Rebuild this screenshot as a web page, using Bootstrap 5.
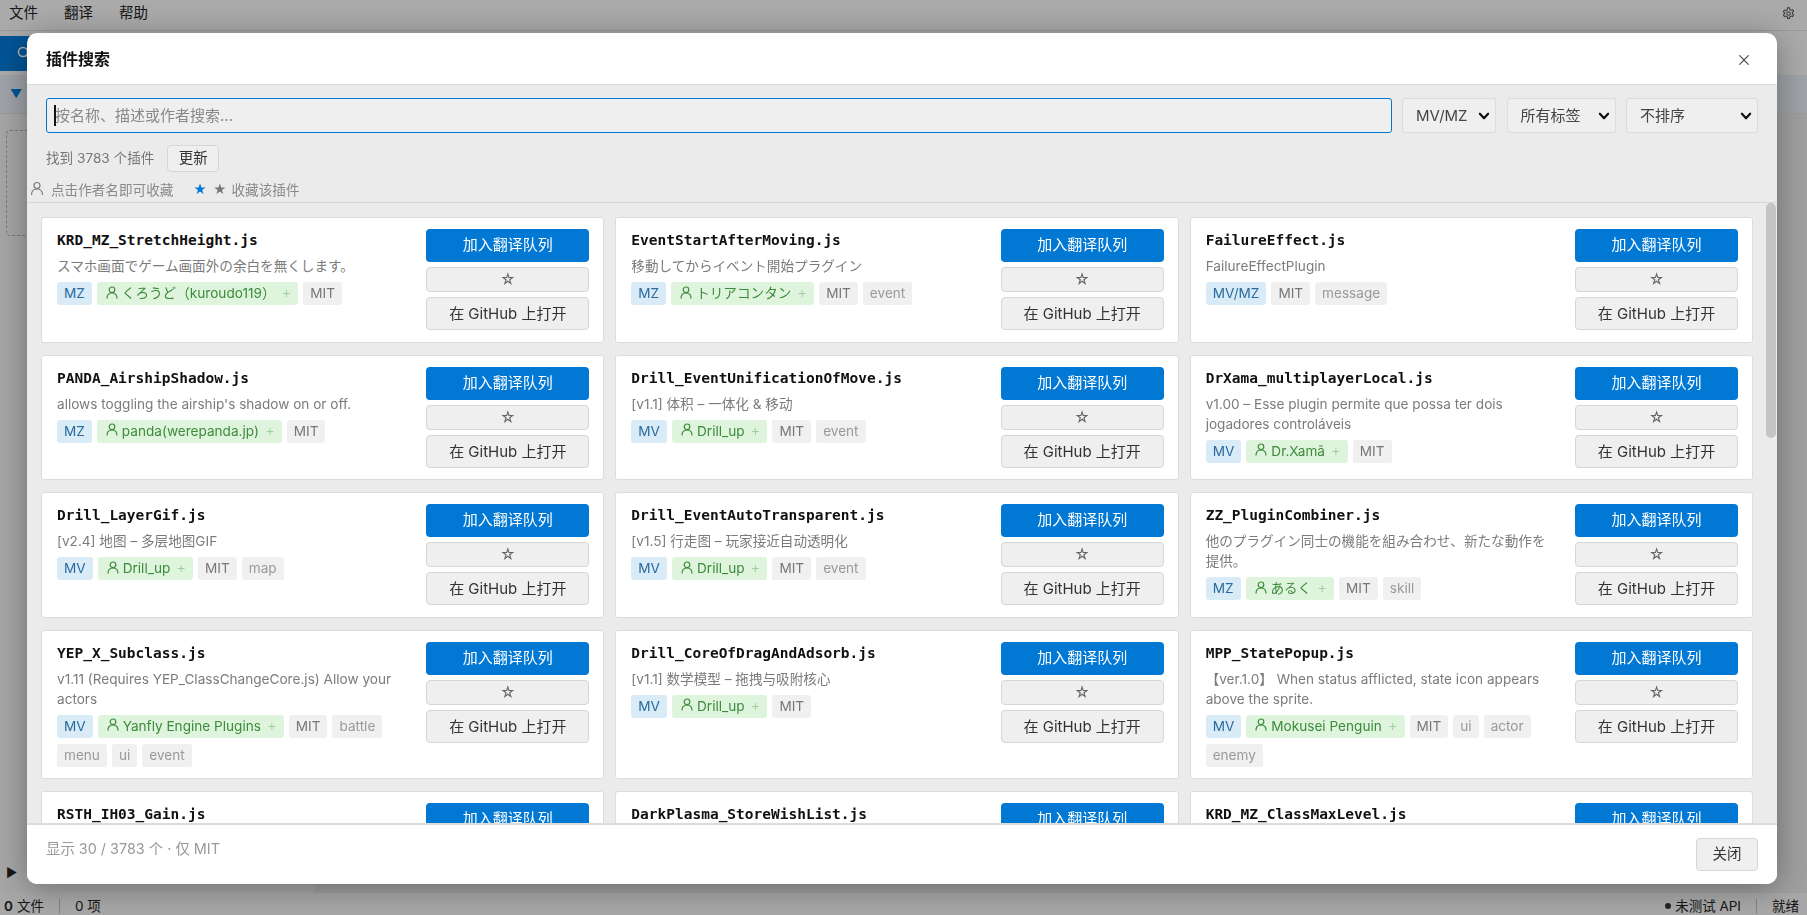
<!DOCTYPE html>
<html lang="zh-CN">
<head>
  <meta charset="UTF-8">
  <title>插件搜索</title>
  <link rel="stylesheet" href="https://cdn.jsdelivr.net/npm/bootstrap@5.3.0/dist/css/bootstrap.min.css">
  <style>
    html, body { height: 100%; overflow: hidden; }
    body {
      font-family: "Inter", "Noto Sans CJK SC", sans-serif;
      font-size: 14px;
      color: #222;
      background: #f2f2f2;
      text-spacing-trim: space-all;
    }
    .app-shell { height: 100vh; }
    .menu-strip { height: 31px; background: #f4f4f5; border-bottom: 1px solid #ddd; padding: 0 8px 4px 9px; font-size: 14.5px; }
    .menu-strip span { margin-right: 26px; }
    .tool-strip { height: 44px; background: #f4f4f5; }
    .tool-blue { width: 60px; height: 35px; background: #0078d4; border-radius: 0 6px 6px 0; padding-left: 17px; }
    .filter-strip { height: 39px; background: #e3e9ef; border-bottom: 1px solid #ddd; color: #0078d4; padding-left: 10px; font-size: 12px; }
    .work-area { background: #e4e4e4; }
    .side-pane { width: 315px; background: #ededed; padding: 16px 6px 11px; }
    .drop-box { height: 106px; border: 1px dashed #aaa; border-radius: 4px; }
    .status-strip { height: 22px; background: #f0f0f0; font-size: 13.5px; padding: 4px 8px 0 4px; }
    .status-sep { width: 1px; height: 15px; background: #bbb; margin: 0 15px; }
    .status-dot { width: 6px; height: 6px; border-radius: 50%; background: #333; margin-right: 4px; }

    .dim-layer { position: fixed; inset: 0; background: rgba(0, 0, 0, .3); }
    .search-dialog {
      position: absolute;
      left: 27px;
      top: 33px;
      width: 1750px;
      height: 851px;
      border: 0;
      border-radius: 10px;
      overflow: hidden;
      background: #fff;
      box-shadow: 0 4px 32px rgba(0, 0, 0, .35);
    }
    .search-dialog .modal-header { height: 52px; padding: 0 19px; border-bottom: 1px solid #d9d9d9; flex: none; }
    .search-dialog .modal-title { font-size: 16px; font-weight: 700; color: #111; }
    .search-dialog .btn-close { font-size: 10px; margin: 2px 5px 0 0; padding: 4px; opacity: .65; }

    .filter-pane { height: 118px; flex: none; background: #ebebeb; border-bottom: 1px solid #d6d6d6; padding: 13px 19px 0; }
    .filter-row { gap: 10.5px; }
    .search-wrap { position: relative; flex: 1; }
    .search-input {
      height: 35px;
      background: #efefef;
      border: 1px solid #0078d4;
      border-radius: 3px;
      padding: 0 8px;
      font-size: 15px;
    }
    .search-input::placeholder { color: #8a8a8a; }
    .search-input:focus { background: #efefef; border-color: #0078d4; box-shadow: none; }
    .caret-bar { position: absolute; left: 8px; top: 7px; width: 1.5px; height: 21px; background: #111; }
    .filter-select {
      height: 35px;
      flex: none;
      background-color: #efefef;
      background-image: url("data:image/svg+xml,%3csvg xmlns='http://www.w3.org/2000/svg' viewBox='0 0 16 16'%3e%3cpath fill='none' stroke='%23111' stroke-linecap='round' stroke-linejoin='round' stroke-width='3' d='m2.500 5 5.500 6 5.500-6'/%3e%3c/svg%3e");
      background-size: 12px 12px;
      background-position: right 5px center;
      border: 1px solid #dcdcdc;
      border-radius: 3px;
      font-size: 15px;
      color: #444;
      padding: 2px 22px 0 13px;
    }
    .count-line { margin-top: 12px; font-size: 13.6px; color: #777; }
    .plain-btn {
      background: #efefef;
      border: 1px solid #d6d6d6;
      border-radius: 4px;
      color: #333;
      font-size: 14.5px;
      line-height: 1;
    }
    .plain-btn:hover { background: #e6e6e6; border-color: #d6d6d6; }
    .refresh-btn { width: 52px; height: 27px; padding: 0; margin-left: 13px; }
    .hint-line { margin: 8px 0 0 -16px; font-size: 13.6px; color: #8a8a8a; }
    .hint-line svg { margin-right: 7px; margin-top: -3px; }
    .star-blue { color: #0078d4; margin-left: 20px; margin-right: 6px; font-size: 13px; }
    .star-grey { color: #777; margin-right: 5px; font-size: 13px; }

    .result-pane { position: relative; flex: 1; min-height: 0; background: #ebebeb; overflow: hidden; padding: 14px 24px 0 14px; }
    .scroll-thumb { position: absolute; top: 0; right: 1px; width: 10px; height: 235px; background: #c4c4c4; border-radius: 5px; }
    .result-grid { display: grid; grid-template-columns: repeat(3, 1fr); gap: 12px 11px; }
    .plugin-box {
      background: #fff;
      border: 1px solid #dcdcdc;
      border-radius: 3px;
      padding: 11px 14px 11px 15px;
      min-height: 125.500px;
    }
    .plugin-info { flex: 1; min-width: 0; padding-right: 20px; }
    .plugin-name { font-family: "DejaVu Sans Mono", monospace; font-size: 14.5px; font-weight: 700; line-height: 20px; margin-top: 1px; color: #111; }
    .plugin-desc { font-size: 13.6px; line-height: 20px; color: #7b7b7b; margin-top: 6px; }
    .pill-row { display: flex; flex-wrap: wrap; gap: 6px 5px; margin-top: 6px; }
    .tag-pill {
      display: inline-flex;
      align-items: center;
      height: 23px;
      padding: 0 7px;
      border-radius: 3px;
      font-size: 13.6px;
      background: #f0f0f0;
      color: #999;
      white-space: nowrap;
    }
    .pill-engine { background: #d8ebf7; color: #2a6a9e; }
    .pill-author { background: #dff4dc; color: #3c8a3c; padding-left: 9px; }
    .pill-author svg { margin-right: 4px; margin-top: -3px; }
    .pill-author i { font-style: normal; color: #9fcf9f; margin-left: 6px; font-size: 15px; font-weight: 300; }
    .pill-license { color: #777; }
    .action-stack { width: 163px; flex: none; display: flex; flex-direction: column; gap: 5px; }
    .queue-btn {
      height: 33px;
      background: #0078d4;
      border: 0;
      border-radius: 4px;
      color: #fff;
      font-size: 15px;
      padding: 0;
    }
    .queue-btn:hover { background: #0078d4; color: #fff; }
    .action-stack .plain-btn { padding: 0; }
    .fav-btn { height: 25px; color: #666; }
    .action-stack .fav-btn, .action-stack .github-btn { font-size: 15px; }
    .github-btn { height: 33px; }

    .search-dialog .modal-footer { height: 61px; flex: none; padding: 0 19px; border-top: 2px solid #dcdcdc; background: #fff; }
    .footer-note { font-size: 14.4px; color: #999; margin-bottom: 12px; }
    .close-btn { width: 62px; height: 33px; padding: 0; margin: 0; }
  </style>
</head>
<body>

  <div class="app-shell d-flex flex-column">
    <div class="menu-strip d-flex align-items-center">
      <span>文件</span><span>翻译</span><span>帮助</span>
      <svg class="ms-auto me-1" width="13" height="13" viewBox="0 0 16 16" fill="none" stroke="#555" stroke-width="1.3"><path d="M6.800 1h2.400l.4 2 1.600.9 1.900-.7 1.200 2.100-1.500 1.300v1.800l1.500 1.300-1.200 2.100-1.900-.7-1.600.9-.4 2H6.800l-.4-2-1.600-.9-1.900.7-1.200-2.100 1.500-1.300V7.200L1.700 5.900l1.200-2.100 1.900.7 1.600-.9z"/><circle cx="8" cy="8" r="2.200"/></svg>
    </div>
    <div class="tool-strip d-flex align-items-center">
      <div class="tool-blue d-flex align-items-center">
        <svg width="14" height="14" viewBox="0 0 14 14" fill="none" stroke="#fff" stroke-width="1.500"><circle cx="6" cy="6" r="4.500"/><path d="m9.500 9.500 4 4"/></svg>
      </div>
    </div>
    <div class="filter-strip d-flex align-items-center">▼</div>
    <div class="work-area flex-fill d-flex">
      <div class="side-pane d-flex flex-column">
        <div class="drop-box"></div>
        <div class="mt-auto small">▶</div>
      </div>
    </div>
    <div class="status-strip d-flex align-items-center">
      <strong class="fw-semibold me-1">0</strong>文件<span class="status-sep"></span>0 项
      <span class="status-dot ms-auto"></span>未测试 API<span class="status-sep"></span>就绪
    </div>
  </div>

  <div class="dim-layer">
    <div class="modal-content search-dialog d-flex flex-column">
      <div class="modal-header">
        <h5 class="modal-title">插件搜索</h5>
        <button type="button" class="btn-close" aria-label="关闭"></button>
      </div>

      <div class="filter-pane">
        <div class="filter-row d-flex">
          <div class="search-wrap">
            <input type="text" class="form-control search-input" placeholder="按名称、描述或作者搜索...">
            <span class="caret-bar"></span>
          </div>
          <select class="form-select filter-select" style="width: 94px"><option>MV/MZ</option></select>
          <select class="form-select filter-select" style="width: 109px"><option>所有标签</option></select>
          <select class="form-select filter-select" style="width: 132px"><option>不排序</option></select>
        </div>
        <div class="count-line d-flex align-items-center">
          找到 3783 个插件
          <button type="button" class="btn plain-btn refresh-btn">更新</button>
        </div>
        <div class="hint-line d-flex align-items-center">
          <svg width="14" height="15" viewBox="0 0 14 15" fill="none" stroke="#777" stroke-width="1.100"><circle cx="7" cy="4.500" r="3"/><path d="M1.500 14c0-3.500 2-6 5.500-6s5.500 2.500 5.500 6"/></svg>
          点击作者名即可收藏
          <span class="star-blue">★</span><span class="star-grey">★</span>收藏该插件
        </div>
      </div>

      <div class="result-pane">
        <div class="result-grid" id="resultGrid"></div>
        <div class="scroll-thumb"></div>
      </div>

      <div class="modal-footer d-flex justify-content-between">
        <span class="footer-note">显示 30 / 3783 个 · 仅 MIT</span>
        <button type="button" class="btn plain-btn close-btn">关闭</button>
      </div>
    </div>
  </div>

  <script>
    const plugins = [
      ["KRD_MZ_StretchHeight.js", "スマホ画面でゲーム画面外の余白を無くします。", "MZ", "くろうど（kuroudo119）", []],
      ["EventStartAfterMoving.js", "移動してからイベント開始プラグイン", "MZ", "トリアコンタン", ["event"]],
      ["FailureEffect.js", "FailureEffectPlugin", "MV/MZ", "", ["message"]],
      ["PANDA_AirshipShadow.js", "allows toggling the airship's shadow on or off.", "MZ", "panda(werepanda.jp)", []],
      ["Drill_EventUnificationOfMove.js", "[v1.1] 体积 – 一体化 & 移动", "MV", "Drill_up", ["event"]],
      ["DrXama_multiplayerLocal.js", "v1.00 – Esse plugin permite que possa ter dois jogadores controláveis", "MV", "Dr.Xamã", []],
      ["Drill_LayerGif.js", "[v2.4] 地图 – 多层地图GIF", "MV", "Drill_up", ["map"]],
      ["Drill_EventAutoTransparent.js", "[v1.5] 行走图 – 玩家接近自动透明化", "MV", "Drill_up", ["event"]],
      ["ZZ_PluginCombiner.js", "他のプラグイン同士の機能を組み合わせ、新たな動作を提供。", "MZ", "あるく", ["skill"]],
      ["YEP_X_Subclass.js", "v1.11 (Requires YEP_ClassChangeCore.js) Allow your actors", "MV", "Yanfly Engine Plugins", ["battle", "menu", "ui", "event"]],
      ["Drill_CoreOfDragAndAdsorb.js", "[v1.1] 数学模型 – 拖拽与吸附核心", "MV", "Drill_up", []],
      ["MPP_StatePopup.js", "【ver.1.0】 When status afflicted, state icon appears above the sprite.", "MV", "Mokusei Penguin", ["ui", "actor", "enemy"]],
      ["RSTH_IH03_Gain.js"],
      ["DarkPlasma_StoreWishList.js"],
      ["KRD_MZ_ClassMaxLevel.js"]
    ];

    const personIcon = '<svg width="12" height="13" viewBox="0 0 12 13" fill="none" stroke="#3c8a3c" stroke-width="1.200"><circle cx="6" cy="3.800" r="2.800"/><path d="M1 12.500c0-3.300 2-5.500 5-5.500s5 2.200 5 5.500"/></svg>';

    function pluginCard([name, desc, engine, author, tags]) {
      let pills = "";
      if (engine) {
        pills += `<span class="tag-pill pill-engine">${engine}</span>`;
        if (author) pills += `<span class="tag-pill pill-author">${personIcon}${author}<i>+</i></span>`;
        pills += `<span class="tag-pill pill-license">MIT</span>`;
        pills += tags.map(t => `<span class="tag-pill">${t}</span>`).join("");
      }
      // last row sits under the footer, only its first button shows
      const moreButtons = engine ? `<button class="btn plain-btn fav-btn">☆</button>
          <button class="btn plain-btn github-btn">在 GitHub 上打开</button>` : "";
      return `<div class="plugin-box d-flex">
        <div class="plugin-info">
          <div class="plugin-name">${name}</div>
          ${desc ? `<div class="plugin-desc">${desc}</div>` : ""}
          <div class="pill-row">${pills}</div>
        </div>
        <div class="action-stack">
          <button class="btn queue-btn">加入翻译队列</button>
          ${moreButtons}
        </div>
      </div>`;
    }

    document.getElementById("resultGrid").innerHTML = plugins.map(pluginCard).join("");
  </script>
</body>
</html>
